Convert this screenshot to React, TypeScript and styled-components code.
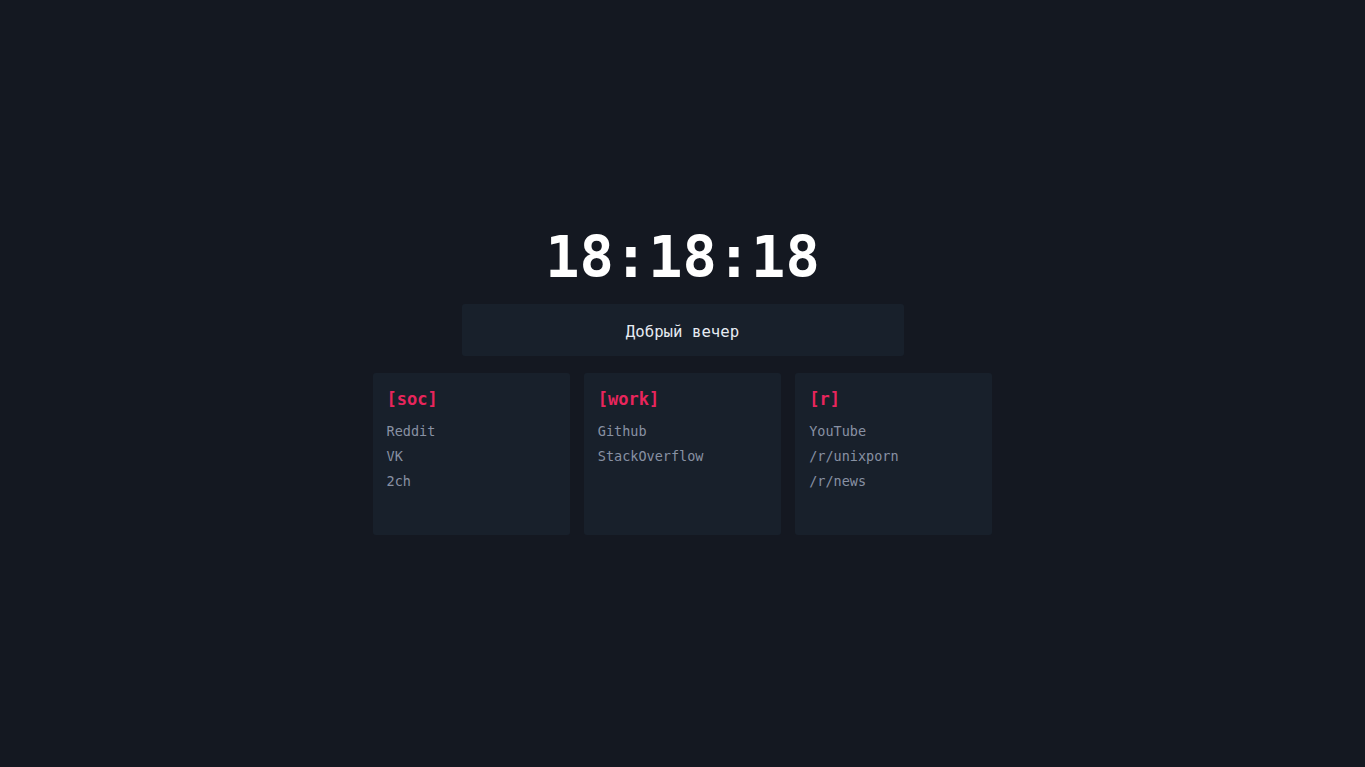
import React from "react";
import styled, { createGlobalStyle } from "styled-components";

const Global = createGlobalStyle`
  html, body { margin: 0; padding: 0; background: #141821; }
  body { font-family: "DejaVu Sans Mono", "Liberation Mono", monospace; }
  * { box-sizing: border-box; }
`;

const Page = styled.div`
  min-height: 100vh;
  display: flex;
  flex-direction: column;
  align-items: center;
  padding-top: 218px;
`;

const Clock = styled.div`
  font-size: 57px;
  font-weight: bold;
  line-height: 78px;
  color: #ffffff;
`;

const Greeting = styled.div`
  width: 442px;
  height: 52px;
  margin-top: 8px;
  padding-top: 3px;
  background: #18202b;
  border-radius: 3px;
  display: flex;
  align-items: center;
  justify-content: center;
  color: #e6ebf2;
  font-size: 15.7px;
`;

const Cards = styled.div`
  width: 620px;
  display: grid;
  grid-template-columns: repeat(3, 1fr);
  gap: 14px;
  margin-top: 17px;
`;

const Card = styled.div`
  height: 162px;
  background: #18202b;
  border-radius: 3px;
  padding: 13px 14px;
  display: flex;
  flex-direction: column;
`;

const Title = styled.div`
  color: #e8255c;
  font-weight: bold;
  font-size: 17px;
  line-height: 26px;
  margin-bottom: 7px;
`;

const Link = styled.a`
  color: #8891a3;
  font-size: 13.5px;
  line-height: 25px;
  text-decoration: none;
`;

const groups = [
  { title: "[soc]", links: ["Reddit", "VK", "2ch"] },
  { title: "[work]", links: ["Github", "StackOverflow"] },
  { title: "[r]", links: ["YouTube", "/r/unixporn", "/r/news"] },
];

export default function App() {
  return (
    <>
      <Global />
      <Page>
        <Clock>18:18:18</Clock>
        <Greeting>Добрый вечер</Greeting>
        <Cards>
          {groups.map((g) => (
            <Card key={g.title}>
              <Title>{g.title}</Title>
              {g.links.map((l) => (
                <Link key={l} href="#">
                  {l}
                </Link>
              ))}
            </Card>
          ))}
        </Cards>
      </Page>
    </>
  );
}
